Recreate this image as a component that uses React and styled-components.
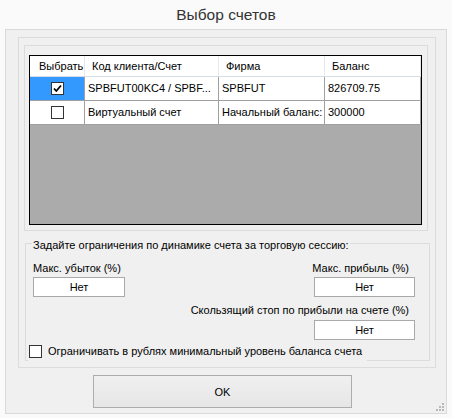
import React from 'react';
import styled, { createGlobalStyle } from 'styled-components';

const GlobalStyle = createGlobalStyle`
    body {
        margin: 0;
        background: #fafafa;
        font-family: "Liberation Sans", Arial, sans-serif;
        font-size: 11px;
        color: #000;
    }
`;

const Window = styled.div`
    width: 452px;
    height: 418px;
    background: #fafafa;
    display: flex;
    flex-direction: column;
`;

const Title = styled.div`
    height: 29px;
    padding-top: 1px;
    box-sizing: border-box;
    display: flex;
    align-items: center;
    justify-content: center;
    font-size: 15.5px;
    color: #333;
`;

const Client = styled.div`
    position: relative;
    margin-left: 5px;
    width: 442px;
    height: 385px;
    box-sizing: border-box;
    border: 1px solid #d9d9d9;
    background: #f0f0f0;
    padding: 7px 0 0 12px;
    display: flex;
    flex-direction: column;
    align-items: flex-start;
`;

const Panel = styled.div`
    width: 418px;
    height: 331px;
    box-sizing: border-box;
    border: 1px solid #dcdcdc;
    padding: 7px 0 0 5px;
    display: flex;
    flex-direction: column;
    align-items: flex-start;
`;

const TableBox = styled.div`
    width: 404px;
    height: 186px;
    box-sizing: border-box;
    border: 1px solid #dcdcdc;
    padding: 9px 0 0 4px;
`;

const Grid = styled.div`
    width: 393px;
    height: 170px;
    box-sizing: border-box;
    border: 1px solid #000;
    background: #ababab;
    display: flex;
    flex-direction: column;
`;

const Row = styled.div`
    display: grid;
    grid-template-columns: 55px 134px 106px 96px;
    height: ${p => (p.$head ? 21 : 24)}px;
`;

const HeadCell = styled.div`
    box-sizing: border-box;
    background: #fff;
    border-right: 1px solid #e8e8e8;
    border-bottom: 1px solid #d6dde6;
    padding-left: ${p => p.$pad || 7}px;
    line-height: 20px;
    white-space: nowrap;
    overflow: hidden;
`;

const Cell = styled.div`
    box-sizing: border-box;
    background: ${p => (p.$selected ? '#3399ff' : '#fff')};
    border-right: 1px solid #a0a0a0;
    border-bottom: 1px solid #a0a0a0;
    padding: 0 3px;
    line-height: 23px;
    white-space: nowrap;
    overflow: hidden;
    display: flex;
    align-items: center;
    justify-content: ${p => (p.$center ? 'center' : 'flex-start')};
`;

const GroupBox = styled.div`
    margin: 12px 0 0 1px;
    width: 405px;
    box-sizing: border-box;
    border: 1px solid #dcdcdc;
    padding: 0 14px 0 7px;
    display: flex;
    flex-direction: column;
`;

const Legend = styled.span`
    align-self: flex-start;
    margin: -6px 0 0 -1px;
    padding: 0 1px;
    background: #f0f0f0;
    line-height: 14px;
`;

const Fields = styled.div`
    margin-top: 9px;
    display: flex;
    justify-content: space-between;
`;

const Field = styled.div`
    display: flex;
    flex-direction: column;
    align-items: ${p => (p.$right ? 'flex-end' : 'flex-start')};
    margin-top: ${p => p.$top || 0}px;
`;

const Label = styled.span`
    line-height: 14px;
    padding-right: ${p => (p.$right ? 6 : 0)}px;
`;

const Input = styled.div`
    margin-top: ${p => p.$top || 2}px;
    width: ${p => p.$w}px;
    height: 20px;
    box-sizing: border-box;
    border: 1px solid #a9a9a9;
    background: #fff;
    display: flex;
    align-items: center;
    justify-content: center;
`;

const CheckRow = styled.label`
    margin: 2px 0 -1px -5px;
    width: 339px;
    height: 19px;
    box-sizing: border-box;
    padding: 0 0 1px 1px;
    background: #f0f0f0;
    display: flex;
    align-items: center;
    gap: 6px;
    white-space: nowrap;
    svg {
        flex-shrink: 0;
    }
`;

const Button = styled.div`
    margin: 7px 0 0 75px;
    width: 259px;
    height: 33px;
    box-sizing: border-box;
    border: 1px solid #adadad;
    background: linear-gradient(#f0f0f0, #e6e6e6);
    display: flex;
    align-items: center;
    justify-content: center;
`;

const Grip = styled.svg`
    position: absolute;
    right: 2px;
    bottom: 2px;
`;

const CheckBox = ({ checked }) => (
    <svg width="13" height="13" viewBox="0 0 13 13">
        <rect x="0.5" y="0.5" width="12" height="12" fill="#fff" stroke="#333" />
        {checked && (
            <path d="M3 6.5 L5.3 9 L10 3.5" fill="none" stroke="#000" strokeWidth="1.8" />
        )}
    </svg>
);

const rows = [
    { checked: true, account: 'SPBFUT00KC4 / SPBF...', firm: 'SPBFUT', balance: '826709.75' },
    { checked: false, account: 'Виртуальный счет', firm: 'Начальный баланс:', balance: '300000' },
];

const App = () => (
    <Window>
        <GlobalStyle />
        <Title>Выбор счетов</Title>
        <Client>
            <Panel>
                <TableBox>
                    <Grid>
                        <Row $head>
                            <HeadCell $pad={9}>Выбрать</HeadCell>
                            <HeadCell>Код клиента/Счет</HeadCell>
                            <HeadCell>Фирма</HeadCell>
                            <HeadCell>Баланс</HeadCell>
                        </Row>
                        {rows.map((row, index) => (
                            <Row key={index}>
                                <Cell $center $selected={index === 0}>
                                    <CheckBox checked={row.checked} />
                                </Cell>
                                <Cell>{row.account}</Cell>
                                <Cell>{row.firm}</Cell>
                                <Cell>{row.balance}</Cell>
                            </Row>
                        ))}
                    </Grid>
                </TableBox>
                <GroupBox>
                    <Legend>Задайте ограничения по динамике счета за торговую сессию:</Legend>
                    <Fields>
                        <Field>
                            <Label>Макс. убыток (%)</Label>
                            <Input $w={92}>Нет</Input>
                        </Field>
                        <Field $right>
                            <Label $right>Макс. прибыль (%)</Label>
                            <Input $w={101}>Нет</Input>
                        </Field>
                    </Fields>
                    <Field $right $top={6}>
                        <Label $right>Скользящий стоп по прибыли на счете (%)</Label>
                        <Input $w={101} $top={3}>Нет</Input>
                    </Field>
                    <CheckRow>
                        <CheckBox />
                        <span>Ограничивать в рублях минимальный уровень баланса счета</span>
                    </CheckRow>
                </GroupBox>
            </Panel>
            <Button>OK</Button>
            <Grip width="8" height="8" viewBox="0 0 8 8">
                {[[6, 0], [3, 3], [6, 3], [0, 6], [3, 6], [6, 6]].map(([x, y]) => (
                    <rect key={`${x}-${y}`} x={x} y={y} width="2" height="2" fill="#b9b9b9" />
                ))}
            </Grip>
        </Client>
    </Window>
);

export default App;
